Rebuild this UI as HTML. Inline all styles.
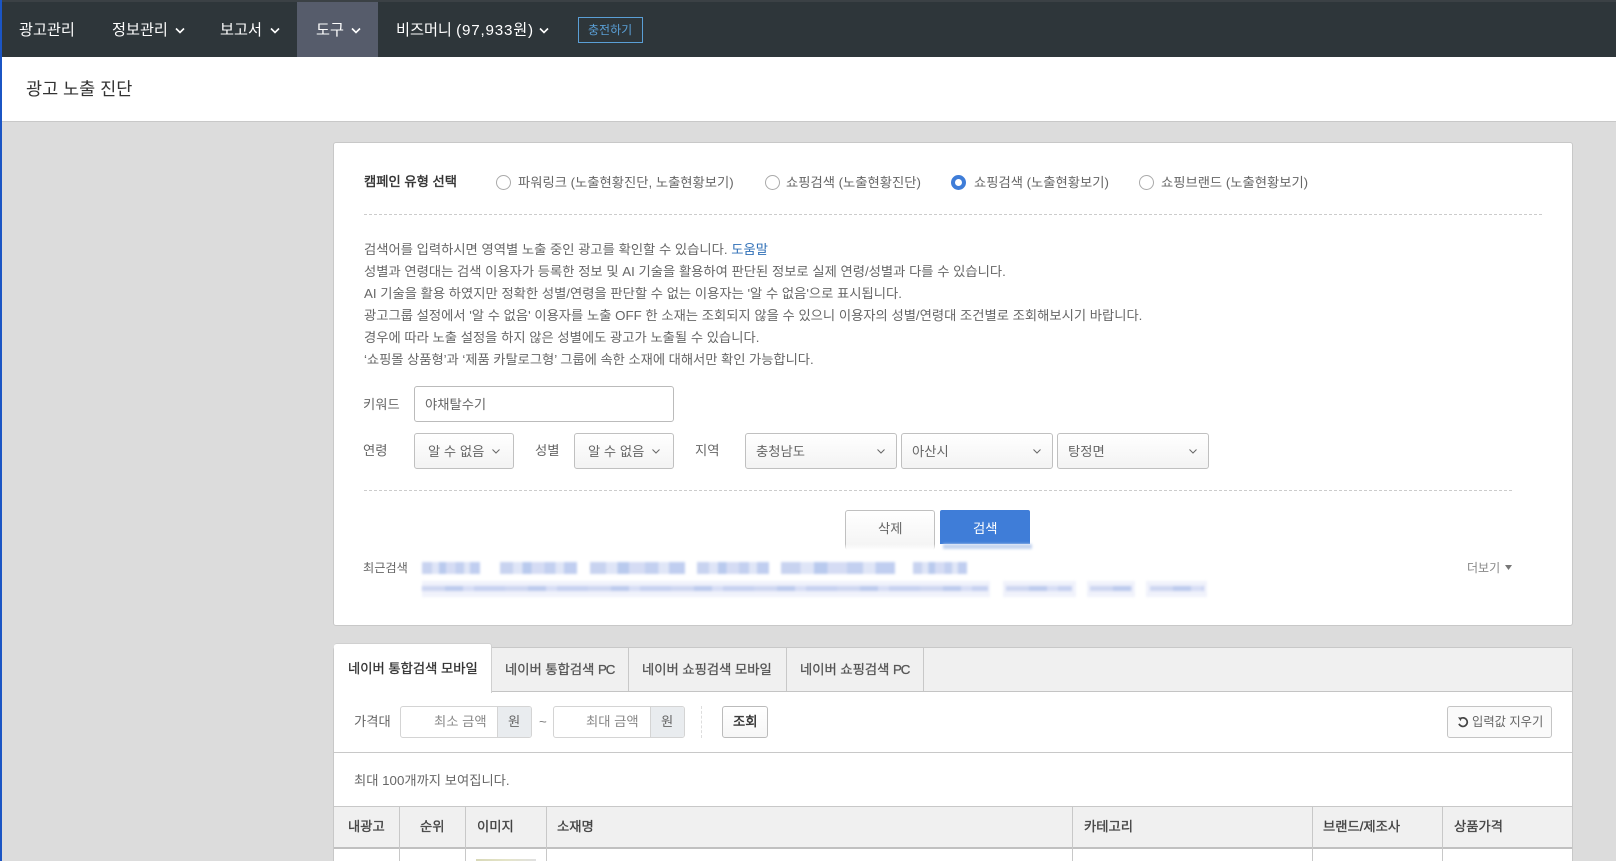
<!DOCTYPE html>
<html lang="ko"><head><meta charset="utf-8"><title>광고 노출 진단</title>
<style>
html,body{margin:0;padding:0;width:1616px;height:861px;overflow:hidden}
body{font-family:"Liberation Sans","Noto Sans CJK KR",sans-serif;font-size:13.3px;color:#666}
#p{position:absolute;left:0;top:0;width:1616px;height:861px;overflow:hidden;background:#dcdcdc}
#p div,#p svg{position:absolute}
.t{position:absolute;white-space:nowrap;line-height:20px;height:20px;transform:translateY(-10px)}
.n{color:#fff;font-size:15.2px}
.b{box-sizing:border-box;border:1px solid #bbb;border-radius:3px;background:#fff}
.sel{background:linear-gradient(#fff,#f3f3f3);border-color:#c0c0c0}
.h{color:#444;-webkit-text-stroke:.35px #444}
.tab{color:#555;-webkit-text-stroke:.3px #555}
.pc{letter-spacing:-1.2px}
.r{box-sizing:border-box;width:15px;height:15px;border:1px solid #aaa;border-radius:50%;background:#fff;top:175px}
.m{filter:blur(1.2px)}
.l1{top:562px;height:12px;background:linear-gradient(90deg,#c8d3f0 0 17%,#dfe5f7 17% 29%,#b9caee 29% 41%,#d5dcf4 41% 58%,#c3d0f0 58% 72%,#e0e6f7 72% 83%,#c0cef0 83%)}
.l2a{top:581px;height:16px;background:#f0f2fb}
.l2b{top:586px;height:5px;background:repeating-linear-gradient(90deg,#cdd6f1 0 23px,#bccaed 23px 41px,#d6ddf5 41px 52px,#c6d1f0 52px 83px)}
</style></head><body><div id="p">
<div style="left:0;top:0;width:1616px;height:57px;background:#2e363a"></div>
<div style="left:0;top:0;width:1616px;height:2px;background:#3b4145"></div>
<div style="left:297px;top:2px;width:81px;height:55px;background:#565c6b"></div>
<span class="t n" style="left:19px;top:31px">광고관리</span>
<span class="t n" style="left:112px;top:31px">정보관리</span>
<svg style="left:175px;top:27px" width="10" height="8" fill="none" stroke="#fff" stroke-width="1.6"><path d="M1 1.500l4 4 4-4"/></svg>
<span class="t n" style="left:220px;top:31px">보고서</span>
<svg style="left:270px;top:27px" width="10" height="8" fill="none" stroke="#fff" stroke-width="1.6"><path d="M1 1.500l4 4 4-4"/></svg>
<span class="t n" style="left:316px;top:31px">도구</span>
<svg style="left:351px;top:27px" width="10" height="8" fill="none" stroke="#fff" stroke-width="1.6"><path d="M1 1.500l4 4 4-4"/></svg>
<span class="t n" style="left:396px;top:31px">비즈머니 <span style="letter-spacing:.8px">(97,933원)</span></span>
<svg style="left:539px;top:27px" width="10" height="8" fill="none" stroke="#fff" stroke-width="1.6"><path d="M1 1.500l4 4 4-4"/></svg>
<div style="left:578px;top:17px;width:65px;height:26px;box-sizing:border-box;border:1px solid #5a9fd6"></div>
<span class="t" style="left:588px;top:30px;font-size:12px;color:#5a9fd6">충전하기</span>

<div style="left:0;top:57px;width:1616px;height:64px;background:#fff;border-bottom:1px solid #c8c8c8"></div>
<span class="t" style="left:26px;top:89px;font-size:17.500px;color:#333">광고 노출 진단</span>

<div style="left:0;top:0;width:2px;height:861px;background:#1b55c4"></div>

<div class="b" style="left:333px;top:142px;width:1240px;height:484px;border-color:#c8c8c8"></div>
<span class="t h" style="left:364px;top:182px;color:#333;-webkit-text-stroke:.4px #333">캠페인 유형 선택</span>
<div class="r" style="left:496px"></div>
<span class="t" style="left:518px;top:183px">파워링크 (노출현황진단, 노출현황보기)</span>
<div class="r" style="left:765px"></div>
<span class="t" style="left:786px;top:183px">쇼핑검색 (노출현황진단)</span>
<div class="r" style="left:951px;background:#fff;border:4.500px solid #3f7dd8"></div>
<span class="t" style="left:974px;top:183px">쇼핑검색 (노출현황보기)</span>
<div class="r" style="left:1139px"></div>
<span class="t" style="left:1161px;top:183px">쇼핑브랜드 (노출현황보기)</span>
<div style="left:364px;top:214px;width:1178px;border-top:1px dashed #ccc"></div>

<span class="t" style="left:364px;top:250px">검색어를 입력하시면 영역별 노출 중인 광고를 확인할 수 있습니다. <span style="color:#2f6fb7">도움말</span></span>
<span class="t" style="left:364px;top:272px">성별과 연령대는 검색 이용자가 등록한 정보 및 AI 기술을 활용하여 판단된 정보로 실제 연령/성별과 다를 수 있습니다.</span>
<span class="t" style="left:364px;top:294px">AI 기술을 활용 하였지만 정확한 성별/연령을 판단할 수 없는 이용자는 '알 수 없음'으로 표시됩니다.</span>
<span class="t" style="left:364px;top:316px">광고그룹 설정에서 '알 수 없음' 이용자를 노출 OFF 한 소재는 조회되지 않을 수 있으니 이용자의 성별/연령대 조건별로 조회해보시기 바랍니다.</span>
<span class="t" style="left:364px;top:338px">경우에 따라 노출 설정을 하지 않은 성별에도 광고가 노출될 수 있습니다.</span>
<span class="t" style="left:364px;top:360px;letter-spacing:-.05px">‘쇼핑몰 상품형’과 ‘제품 카탈로그형’ 그룹에 속한 소재에 대해서만 확인 가능합니다.</span>

<span class="t" style="left:363px;top:405px">키워드</span>
<div class="b" style="left:414px;top:386px;width:260px;height:36px"></div>
<span class="t" style="left:425px;top:405px">야채탈수기</span>

<span class="t" style="left:363px;top:451px">연령</span>
<div class="b sel" style="left:414px;top:433px;width:100px;height:36px"></div>
<span class="t" style="left:428px;top:452px">알 수 없음</span>
<svg style="left:491px;top:448px" width="10" height="7" fill="none" stroke="#666"><path d="M1.500 1.500l3.500 3.500 3.500-3.500"/></svg>
<span class="t" style="left:535px;top:451px">성별</span>
<div class="b sel" style="left:574px;top:433px;width:100px;height:36px"></div>
<span class="t" style="left:588px;top:452px">알 수 없음</span>
<svg style="left:651px;top:448px" width="10" height="7" fill="none" stroke="#666"><path d="M1.500 1.500l3.500 3.500 3.500-3.500"/></svg>
<span class="t" style="left:695px;top:451px">지역</span>
<div class="b sel" style="left:745px;top:433px;width:152px;height:36px"></div>
<span class="t" style="left:756px;top:452px">충청남도</span>
<svg style="left:876px;top:448px" width="10" height="7" fill="none" stroke="#666"><path d="M1.500 1.500l3.500 3.500 3.500-3.500"/></svg>
<div class="b sel" style="left:901px;top:433px;width:152px;height:36px"></div>
<span class="t" style="left:912px;top:452px">아산시</span>
<svg style="left:1032px;top:448px" width="10" height="7" fill="none" stroke="#666"><path d="M1.500 1.500l3.500 3.500 3.500-3.500"/></svg>
<div class="b sel" style="left:1057px;top:433px;width:152px;height:36px"></div>
<span class="t" style="left:1068px;top:452px">탕정면</span>
<svg style="left:1188px;top:448px" width="10" height="7" fill="none" stroke="#666"><path d="M1.500 1.500l3.500 3.500 3.500-3.500"/></svg>
<div style="left:364px;top:490px;width:1148px;border-top:1px dashed #ccc"></div>

<div class="b sel" style="left:845px;top:510px;width:90px;height:40px;border-bottom:0"></div>
<div style="left:843px;top:544px;width:94px;height:6px;background:linear-gradient(rgba(255,255,255,0),#fff)"></div>
<span class="t" style="left:878px;top:529px">삭제</span>
<div style="left:940px;top:510px;width:90px;height:34px;background:#3f7dd8;border-radius:2px 2px 0 0"></div>
<div class="m" style="left:943px;top:544px;width:89px;height:5px;background:#c4d4ef"></div>
<span class="t" style="left:973px;top:529px;color:#fff">검색</span>

<span class="t" style="left:363px;top:568px;font-size:12.200px">최근검색</span>
<div class="m l1" style="left:422px;width:58px"></div>
<div class="m l1" style="left:500px;width:77px"></div>
<div class="m l1" style="left:590px;width:95px"></div>
<div class="m l1" style="left:697px;width:72px"></div>
<div class="m l1" style="left:781px;width:114px"></div>
<div class="m l1" style="left:913px;width:54px"></div>
<div class="m l2a" style="left:422px;width:568px"></div>
<div class="m l2a" style="left:1003px;width:73px"></div>
<div class="m l2a" style="left:1087px;width:48px"></div>
<div class="m l2a" style="left:1146px;width:61px"></div>
<div class="m l2b" style="left:422px;width:566px"></div>
<div class="m l2b" style="left:1006px;width:66px"></div>
<div class="m l2b" style="left:1090px;width:42px"></div>
<div class="m l2b" style="left:1150px;width:54px"></div>
<span class="t" style="left:1467px;top:568px;font-size:12px;color:#888">더보기</span>
<svg style="left:1504px;top:565px" width="9" height="6"><path d="M1 0h7L4.500 5z" fill="#777"/></svg>

<!-- second card -->
<div class="b" style="left:333px;top:647px;width:1240px;height:240px;border-color:#c8c8c8;border-radius:3px 3px 0 0"></div>
<div style="left:334px;top:648px;width:1238px;height:43px;background:#f0f0f0;border-bottom:1px solid #c4c4c4"></div>
<div style="left:334px;top:643px;width:158px;height:50px;background:#fff;border:1px solid #d0d0d0;border-width:1px 1px 0 0;border-radius:3px 3px 0 0;box-sizing:border-box"></div>
<div style="left:628px;top:648px;width:1px;height:43px;background:#c8c8c8"></div>
<div style="left:786px;top:648px;width:1px;height:43px;background:#c8c8c8"></div>
<div style="left:923px;top:648px;width:1px;height:43px;background:#c8c8c8"></div>
<span class="t tab" style="left:348px;top:669px;color:#333;-webkit-text-stroke:.3px #333">네이버 통합검색 모바일</span>
<span class="t tab" style="left:505px;top:670px">네이버 통합검색 <span class="pc">PC</span></span>
<span class="t tab" style="left:642px;top:670px">네이버 쇼핑검색 모바일</span>
<span class="t tab" style="left:800px;top:670px">네이버 쇼핑검색 <span class="pc">PC</span></span>

<span class="t" style="left:354px;top:722px">가격대</span>
<div class="b" style="left:400px;top:706px;width:132px;height:32px;border-color:#d4d4d4;overflow:hidden"><div style="left:96px;top:0;width:34px;height:30px;background:#e9ecef;border-left:1px solid #d4d4d4"></div></div>
<span class="t" style="left:434px;top:722px;color:#888">최소 금액</span>
<span class="t" style="left:508px;top:722px">원</span>
<span class="t" style="left:539px;top:722px;color:#777">~</span>
<div class="b" style="left:553px;top:706px;width:132px;height:32px;border-color:#d4d4d4;overflow:hidden"><div style="left:96px;top:0;width:35px;height:30px;background:#e9ecef;border-left:1px solid #d4d4d4"></div></div>
<span class="t" style="left:586px;top:722px;color:#888">최대 금액</span>
<span class="t" style="left:661px;top:722px">원</span>
<div style="left:701px;top:706px;height:32px;border-left:1px dashed #ddd"></div>
<div class="b" style="left:722px;top:706px;width:46px;height:32px;background:linear-gradient(#fff,#f6f6f6)"></div>
<span class="t h" style="left:733px;top:722px;color:#333;-webkit-text-stroke:.4px #333">조회</span>
<div class="b" style="left:1447px;top:706px;width:105px;height:32px;background:#fafafa;border-color:#c4c4c4"></div>
<svg style="left:1457px;top:716px" width="12" height="13" fill="none" stroke="#444" stroke-width="1.700"><path d="M3.200 2.800A4.300 4.300 0 1 1 2 7.800"/><path d="M1 1.200l3.600.6-.8 3.400z" fill="#444" stroke="none"/></svg>
<span class="t" style="left:1472px;top:722px;font-size:12.300px">입력값 지우기</span>
<div style="left:334px;top:752px;width:1238px;height:1px;background:#c8c8c8"></div>
<span class="t" style="left:354px;top:781px">최대 100개까지 보여집니다.</span>

<div style="left:334px;top:806px;width:1238px;height:41px;background:#f0f0f0;border-top:1px solid #c8c8c8;box-sizing:border-box"></div>
<div style="left:334px;top:847px;width:1238px;height:2px;background:#c0c0c0"></div>
<div style="left:399px;top:806px;width:1px;height:55px;background:#c8c8c8"></div>
<div style="left:465px;top:806px;width:1px;height:55px;background:#c8c8c8"></div>
<div style="left:546px;top:806px;width:1px;height:55px;background:#c8c8c8"></div>
<div style="left:1072px;top:806px;width:1px;height:55px;background:#c8c8c8"></div>
<div style="left:1312px;top:806px;width:1px;height:55px;background:#c8c8c8"></div>
<div style="left:1442px;top:806px;width:1px;height:55px;background:#c8c8c8"></div>
<span class="t h" style="left:348px;top:827px">내광고</span>
<span class="t h" style="left:420px;top:827px">순위</span>
<span class="t h" style="left:477px;top:827px">이미지</span>
<span class="t h" style="left:557px;top:827px">소재명</span>
<span class="t h" style="left:1084px;top:827px">카테고리</span>
<span class="t h" style="left:1323px;top:827px">브랜드/제조사</span>
<span class="t h" style="left:1454px;top:827px">상품가격</span>
<div style="left:476px;top:859px;width:60px;height:2px;background:linear-gradient(90deg,#d8d8b8,#e4e4c8 50%,#e0e0e0)"></div>
</div></body></html>
